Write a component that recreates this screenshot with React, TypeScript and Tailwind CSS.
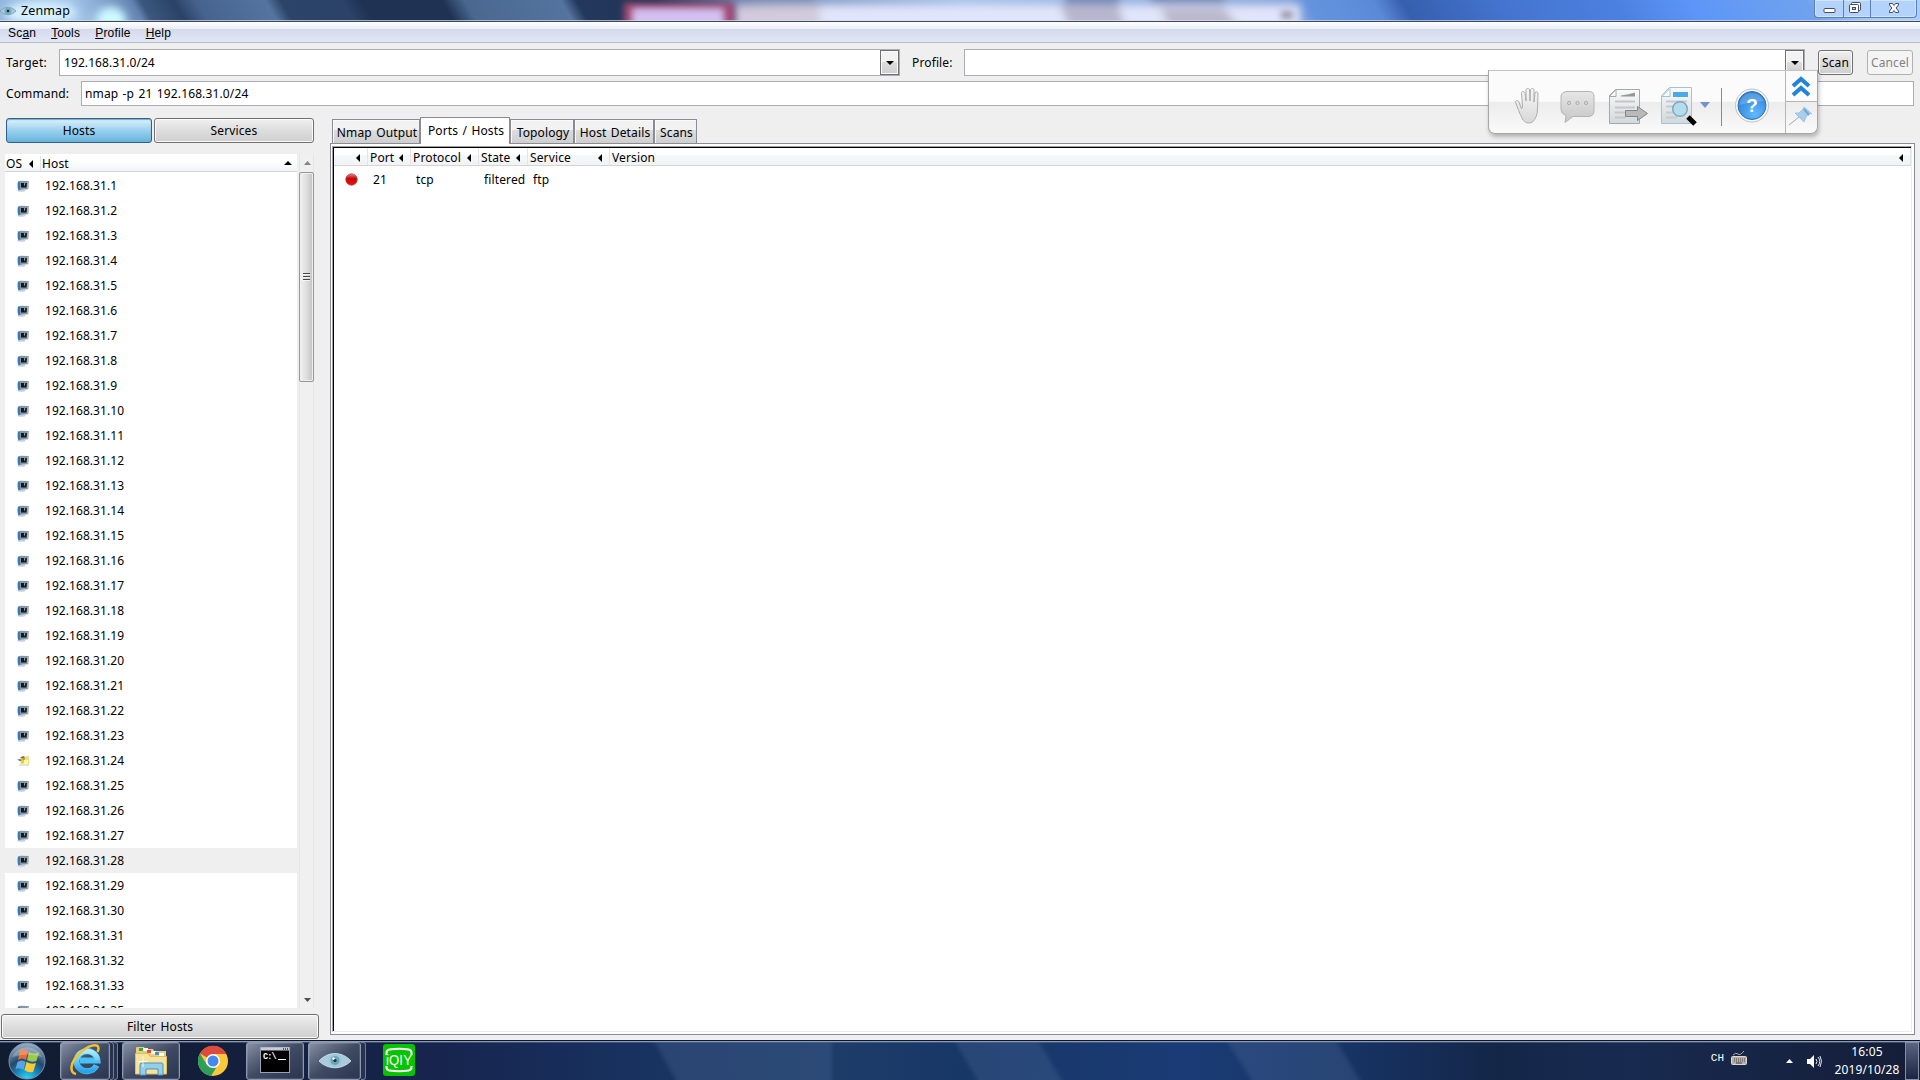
import type { ReactNode } from 'react'

const hosts = [...Array.from({ length: 33 }, (_, i) => i + 1), 35]

const columns = [
  { label: '', width: 'w-[34px]' },
  { label: 'Port', width: 'w-[43px]' },
  { label: 'Protocol', width: 'w-[68px]' },
  { label: 'State', width: 'w-[49px]' },
  { label: 'Service', width: 'w-[82px]' },
  { label: 'Version', width: 'flex-1' },
]

const tabs = [
  { label: 'Nmap Output', width: 'w-[88px]' },
  { label: 'Ports / Hosts', width: 'w-[90px]', active: true },
  { label: 'Topology', width: 'w-[64px]' },
  { label: 'Host Details', width: 'w-[80px]' },
  { label: 'Scans', width: 'w-[43px]' },
]

const LeftArrow = () => (
  <svg width="4" height="8" className="shrink-0">
    <path d="M4 0v8L0 4z" fill="#000" />
  </svg>
)

const HostIcon = () => (
  <svg width="12" height="12" className="shrink-0">
    <ellipse cx="4.5" cy="10.6" rx="4" ry="1.2" fill="#c3cde8" />
    <path d="M1 1.5 4 1v8.5L1.5 10.500C.3 8 .3 4 1 1.5z" fill="#3f79b5" />
    <path d="M3 .8 12 1l-.8 8.3L3 9.8z" fill="#8397a5" />
    <path d="M4 3h6L9.500 7.500H4z" fill="#15191d" />
    <path d="M7 3.200h1.500L7 6.500z" fill="#aebac1" />
    <path d="M10.500 1.500H12l-.8 7h-1z" fill="#b9c2c8" />
  </svg>
)

const ServerIcon = () => (
  <svg width="12" height="12" className="shrink-0">
    <path d="M5 2 12 1v9.500H3z" fill="#f3dd83" />
    <path d="M7 5h4v4.500H6z" fill="#fbf3c2" />
    <path d="M3 3 6 1l2 1-3 2z" fill="#e3392b" />
    <path d="M1 5.500 5 3h2v5H5L4 6.500z" fill="#f5cc00" />
    <path d="M0 4.500 3.500 4l1 2H3z" fill="#3a8fcf" />
    <path d="M5 3.500 8 3v1.500L6 5z" fill="#4fc23c" />
    <path d="M2 9.500h10v1.500H2z" fill="#e5e2d8" />
  </svg>
)

const DropButton = () => (
  <div className="flex w-[19px] items-center justify-center border border-[#707070] bg-linear-to-b from-[#f2f2f2] from-50% via-[#dddddd] via-50% to-[#cfcfcf] shadow-[inset_0_0_0_1px_#fafafa]">
    <svg width="8" height="4"><path d="M0 0h8L4 4z" fill="#000" /></svg>
  </div>
)

const Button = ({ className, children }: { className: string; children: ReactNode }) => (
  <div className={`flex h-[25px] items-center justify-center rounded-[3px] border ${className}`}>{children}</div>
)

const plain =
  'border-[#707070] bg-linear-to-b from-[#f0f0f0] from-0% via-[#dddddd] via-50% to-[#cfcfcf] shadow-[inset_0_0_0_1px_#fafafa]'

const TitleBar = () => (
  <div className="relative h-[22px] overflow-hidden">
    <svg width="1920" height="22" className="absolute inset-0">
      <defs>
        <linearGradient id="glass" gradientUnits="userSpaceOnUse" x1="0" x2="1920" y1="0" y2="0" gradientTransform="skewX(30)">
          <stop offset="0" stopColor="#94b6de" />
          <stop offset=".035" stopColor="#a5c8ea" />
          <stop offset=".05" stopColor="#8babd4" />
          <stop offset=".068" stopColor="#6384b2" />
          <stop offset=".073" stopColor="#3c577f" />
          <stop offset=".09" stopColor="#2b4266" />
          <stop offset=".102" stopColor="#46638f" />
          <stop offset=".138" stopColor="#55749f" />
          <stop offset=".146" stopColor="#2b4468" />
          <stop offset=".178" stopColor="#2c4268" />
          <stop offset=".188" stopColor="#1f3254" />
          <stop offset=".23" stopColor="#1f3254" />
          <stop offset=".242" stopColor="#4a688f" />
          <stop offset=".292" stopColor="#54739f" />
          <stop offset=".3" stopColor="#22385c" />
          <stop offset=".34" stopColor="#213458" />
          <stop offset=".4" stopColor="#7b93bd" />
          <stop offset=".5" stopColor="#a9c3ea" />
          <stop offset=".67" stopColor="#8aa6dc" />
          <stop offset=".68" stopColor="#6594de" />
          <stop offset=".715" stopColor="#5a89d8" />
          <stop offset=".73" stopColor="#365fae" />
          <stop offset=".78" stopColor="#4474cf" />
          <stop offset=".84" stopColor="#4c80e0" />
          <stop offset=".88" stopColor="#5d96f8" />
          <stop offset=".94" stopColor="#6fa2ee" />
          <stop offset=".97" stopColor="#a5cbf8" />
          <stop offset="1" stopColor="#a9d0fb" />
        </linearGradient>
        <filter id="soft" filterUnits="userSpaceOnUse" x="-20" y="-20" width="1960" height="70"><feGaussianBlur stdDeviation="4" /></filter>
        <filter id="softer" filterUnits="userSpaceOnUse" x="600" y="-20" width="720" height="70"><feGaussianBlur stdDeviation="3" /></filter>
      </defs>
      <rect width="1920" height="22" fill="url(#glass)" />
      <g filter="url(#soft)">
        <ellipse cx="40" cy="13" rx="36" ry="12" fill="#d6f1ff" />
        <ellipse cx="111" cy="21" rx="15" ry="14" fill="#ccfbff" />
        <path d="M735 5h565v24H735z" fill="#e1e5fa" />
        <path d="M735 5h85v24h-85z" fill="#d3cbdc" />
        <path d="M1060 5h58l8 24h-56z" fill="#b9b6ce" />
        <path d="M1160 8h64l16 20h-70z" fill="#bcb8cb" />
        <path d="M1065-8h55v12h-55zM1150-8h75v12h-75zM735-8h80v10h-80z" fill="#6f86b4" />
      </g>
      <g filter="url(#softer)">
        <path d="M624 3h110v26H624z" fill="#a54a72" />
        <path d="M633 9h90v20h-90z" fill="#d3c0f2" />
        <path d="M1281 11h12v8h-12z" fill="#9896a9" />
      </g>
      <path d="M0 20.5h1920" stroke="#d5e0ef" strokeOpacity=".7" />
      <path d="M0 21.5h1920" stroke="#3c4760" />
    </svg>
    <div className="relative flex h-[21px] items-center">
      <svg width="16" height="10" viewBox="0 0 16 10" className="mt-[1px]">
        <path d="M0 5C5 0 11 0 16 5 11 10 5 10 0 5z" fill="#a9cbd8" stroke="#6d97ab" strokeWidth=".7" />
        <circle cx="8" cy="5" r="3.500" fill="#78abc0" />
        <circle cx="8" cy="5" r="1.3" fill="#12303e" />
      </svg>
      <span className="ml-[5px] mt-[2px] text-[12.5px] leading-none tracking-[0.1px]">Zenmap</span>
      <div className="-mt-[4px] ml-auto mr-[3px] flex h-[18px] w-[103px] rounded-b-[4px] border border-t-0 border-[#5b7fb5] bg-[#b3d3fa] shadow-[inset_0_0_0_1px_#d0e4fb]">
        <svg width="101" height="17">
          <path d="M28.5 0v17M55.5 0v17" stroke="#5b7fb5" />
          <rect x="9" y="8.5" width="11" height="4" rx="1" fill="#fff" stroke="#444b5c" />
          <rect x="36.5" y="2.5" width="9" height="8" rx="1" fill="#fff" stroke="#444b5c" />
          <rect x="34.5" y="4.5" width="9" height="8" rx="1" fill="#fff" stroke="#444b5c" />
          <rect x="37.5" y="7.5" width="3" height="2" fill="#b3d3fa" stroke="#444b5c" />
          <path d="M74.5 3.5h3l1.5 2 1.5-2h3v1.5l-2.5 3 2.5 3v1.5h-3l-1.5-2-1.5 2h-3V11l2.5-3-2.5-3z" fill="#fff" stroke="#444b5c" />
        </svg>
      </div>
    </div>
  </div>
)

const MenuBar = () => (
  <div className="flex h-[21px] items-center border-b border-[#b6bccc] bg-linear-to-b from-white from-0% via-[#e9edf5] via-35% to-[#e0e5f5] font-['Liberation_Sans',sans-serif] text-[12px] tracking-[0.2px]">
    <div className="flex h-full w-full items-center gap-[15px] bg-linear-to-b from-transparent from-35% via-[#d4daec] via-35% to-[#e2e7f6] pl-2 pt-[2px]">
      <span>Sc<u>a</u>n</span>
      <span><u>T</u>ools</span>
      <span><u>P</u>rofile</span>
      <span><u>H</u>elp</span>
    </div>
  </div>
)

const HostPanel = () => (
  <div className="flex w-[330px] flex-col">
    <div className="mt-[12px] flex gap-[2px] pl-[6px]">
      <Button className="w-[146px] border-[#2c628b] bg-linear-to-b from-[#e0f1fa] from-0% via-[#98d1ef] via-50% to-[#68b3db] shadow-[inset_0_1px_1px_#7fa9c4]">Hosts</Button>
      <Button className={`w-[160px] ${plain}`}>Services</Button>
    </div>
    <div className="mt-[11px] flex h-[854px] pl-[5px]">
      <div className="w-[292px] overflow-hidden bg-white">
        <div className="flex h-[18px] items-center border-b border-[#d5d5d5] bg-linear-to-b from-white from-45% to-[#f1f3f5] pt-[2px]">
          <div className="flex h-full w-[36px] items-center justify-between border-r border-[#e2e4e6] pl-[1px] pr-[7px]">OS <LeftArrow /></div>
          <span className="pl-[1px]">Host</span>
          <svg width="8" height="4" className="-mt-[2px] ml-auto mr-[5px]"><path d="M0 4h8L4 0z" /></svg>
        </div>
        <div className="pt-px">
          {hosts.map((n) => (
            <div key={n} className={`flex h-[25px] items-center gap-[16px] pl-[12px] ${n === 28 ? 'bg-[#efefef]' : ''}`}>
              {n === 24 ? <ServerIcon /> : <HostIcon />}
              <span className="tracking-[0.06px]">192.168.31.{n}</span>
            </div>
          ))}
        </div>
      </div>
      <div className="ml-[2px] flex w-[15px] flex-col items-center border-x border-[#e6e6e6] bg-[#f0f0f0]">
        <div className="flex h-[18px] items-center pl-px"><svg width="7" height="4"><path d="M0 4h7L3.5 0z" fill="#858585" /></svg></div>
        <div className="flex h-[210px] w-[15px] shrink-0 items-center justify-center rounded-[2px] border border-[#979797] bg-linear-to-r from-[#f3f3f3] from-0% via-[#dedede] via-50% to-[#c2c2c6] shadow-[inset_0_0_0_1px_#eeeeee]">
          <svg width="7" height="9"><path d="M0 .5h7M0 3.500h7M0 6.500h7" stroke="#444" /><path d="M0 1.500h7M0 4.500h7M0 7.500h7" stroke="#fff" strokeOpacity=".7" /></svg>
        </div>
        <svg width="7" height="4" className="mb-[6px] ml-px mt-auto"><path d="M0 0h7L3.5 4z" fill="#505050" /></svg>
      </div>
    </div>
    <Button className={`ml-[1px] mt-[6px] w-[318px] ${plain}`}>Filter Hosts</Button>
  </div>
)

const Notebook = () => (
  <div className="flex flex-1 flex-col pr-[5px]">
    <div className="mt-[11px] flex h-[26px] items-end pl-[2px]">
      {tabs.map((tab) => (
        <div
          key={tab.label}
          className={`flex items-center justify-center whitespace-nowrap border border-b-0 border-[#898c95] pl-[2px] ${tab.width} ${
            tab.active ? 'relative z-10 -mb-px h-[27px] bg-white' : 'h-[24px] bg-linear-to-b from-[#f2f2f2] from-45% via-[#dddddd] via-45% to-[#cfcfcf] pt-[2px] shadow-[inset_1px_1px_0_#fafafa]'
          }`}
        >
          {tab.label}
        </div>
      ))}
    </div>
    <div className="h-[892px] border border-[#898c95] bg-white p-[2px] pl-px">
      <div className="h-full border border-[#ededed] border-t-[#a0a0a0] border-l-[#a0a0a0]">
        <div className="h-full border-l border-t border-black">
          <div className="flex h-[18px] border-b border-[#d5d5d5] bg-linear-to-b from-white from-40% via-[#f5f7f8] via-40% to-[#f0f2f4]">
            {columns.map((col) => (
              <div key={col.label} className={`flex items-center justify-between border-r border-[#e2e4e6] pl-[2px] pr-[7px] pt-[2px] ${col.width}`}>
                <span>{col.label}</span>
                <LeftArrow />
              </div>
            ))}
          </div>
          <div className="flex h-[27px] items-center pl-[11px]">
            <svg width="13" height="13">
              <defs><linearGradient id="dot" x1="0" x2="0" y1="0" y2="1"><stop offset="0" stopColor="#e98b8b" /><stop offset=".4" stopColor="#c40808" /><stop offset="1" stopColor="#f01010" /></linearGradient></defs>
              <circle cx="6.5" cy="6.5" r="5.7" fill="url(#dot)" stroke="#b03a3a" strokeWidth=".8" />
            </svg>
            <span className="ml-[15px] w-[43px]">21</span>
            <span className="w-[68px]">tcp</span>
            <span className="w-[49px]">filtered</span>
            <span>ftp</span>
          </div>
        </div>
      </div>
    </div>
  </div>
)

// Docked capture toolbar that floats over the window
const FloatingToolbar = () => (
  <div className="absolute left-[1488px] top-[70px] flex h-[64px] w-[330px] overflow-visible rounded-b-[7px] border border-[#a6a6a6] border-t-[#c4c4c4] bg-linear-to-b from-[#fbfbfb] from-49% via-[#ececec] via-50% to-[#fafafa] shadow-[1px_3px_4px_rgba(0,0,0,0.25)]">
    <svg width="296" height="62" className="shrink-0">
      <defs>
        <linearGradient id="grey" x1="0" x2="0" y1="0" y2="1"><stop offset="0" stopColor="#e6e6e6" /><stop offset="1" stopColor="#c6c6c6" /></linearGradient>
        <linearGradient id="page" x1="0" x2="0" y1="0" y2="1"><stop offset="0" stopColor="#fafafa" /><stop offset="1" stopColor="#d2d8dc" /></linearGradient>
        <linearGradient id="palm" x1="0" x2="0" y1="0" y2="1"><stop offset="0" stopColor="#f6f6f6" /><stop offset="1" stopColor="#d8d8d8" /></linearGradient>
        <radialGradient id="help" cx=".6" cy=".8" r=".8"><stop offset="0" stopColor="#62b8ff" /><stop offset="1" stopColor="#2a7fd4" /></radialGradient>
      </defs>
      {/* hand */}
      <path d="M26.500 31c0-2 3-2 3.500 0l2.500 7 1-2-1-14c0-2 3-2 3.500 0l1 8V19c0-2 3.500-2 3.500 0l.5 11 .5-11c0-2 3.500-2 3.500 0v12l1-9c.5-2 3-1.500 3 1l-.500 15c0 6-2 10-5 13-4 2-8 1-10-3-3-6-5-11-7-17z" fill="url(#palm)" stroke="#adadad" />
      {/* speech bubble */}
      <path d="M79 20.500h21q5 0 5 5v14q0 6-6 6H84l-8 6 1-7q-5-2-5-6V26q0-5.500 7-5.500z" fill="url(#grey)" stroke="#b4b4b4" />
      <g fill="#d9d9d9" stroke="#999" strokeWidth=".7"><circle cx="80" cy="32" r="1.600" /><circle cx="88.500" cy="32" r="1.600" /><circle cx="97" cy="32" r="1.600" /></g>
      {/* export page */}
      <path d="M126.500 18.500h24v34h-30v-28z" fill="url(#page)" stroke="#a8a8a8" strokeLinejoin="round" />
      <path d="M120.500 25.500h6.500v-7z" fill="#fff" stroke="#a8a8a8" />
      <path d="M132 24.500q8-1 14-3v4h-14z" fill="#989898" />
      <path d="M126 30.500h20M126 36.500h20M126 41.500h11M126 46.500h11" stroke="#c6c6c6" strokeWidth="2" />
      <path d="M136.500 39.500h12v-4l10 7-10 7v-4h-12z" fill="#b9b9b9" stroke="#858585" />
      {/* search page */}
      <path d="M180.500 16.500h22v36h-30v-28z" fill="url(#page)" stroke="#a3c3d6" strokeLinejoin="round" />
      <path d="M173 25.500h8v-8z" fill="#fff" stroke="#a3c3d6" />
      <path d="M184 21h15v5h-15z" fill="#49aaea" />
      <path d="M177 30.500h21M177 35.500h11M177 41.500h9M177 46.500h11" stroke="#c3ccd2" strokeWidth="2" />
      <circle cx="191" cy="38" r="7.300" fill="#b5dceb" stroke="#7ba9c3" strokeWidth="1.500" />
      <path d="m199 46 7 7" stroke="#000" strokeWidth="5" />
      <path d="M211 31h10l-5 6z" fill="#7690cf" />
      <path d="M232.500 17v38" stroke="#8b8b8b" />
      {/* help */}
      <circle cx="263" cy="34.500" r="16.500" fill="#f6f6f6" stroke="#c2c2c2" />
      <circle cx="263" cy="34.500" r="14" fill="url(#help)" stroke="#2872ba" />
      <path d="M250 34a13 13 0 0 1 25-4q-13 1-25 4z" fill="#fff" fillOpacity=".18" />
      <text x="263" y="41" textAnchor="middle" fill="#fff" className="font-['Liberation_Sans'] text-[19px] font-bold">?</text>
    </svg>
    <svg width="32" height="62" className="shrink-0">
      <path d="M.5 0v62M0 30.500h32" stroke="#b5b5b5" />
      <path d="m8 15 8-7 8 7M8 24l8-7 8 7" fill="none" stroke="#2084d8" strokeWidth="4" />
      <path d="m4 54 10-8" stroke="#9fa9b2" />
      <path d="m10 42 9 9 2-5 4-4 2 1-8-7-1 2-4 4z" fill="#a6cdea" stroke="#9cc6e6" />
      <path d="m19 38 5 6" stroke="#6aa9da" strokeWidth="2" />
    </svg>
  </div>
)

const taskButton = 'flex h-[38px] shrink-0 items-center justify-center rounded-[3px] border border-[#8d98ae] bg-linear-to-br from-[#8791a6] via-[#3f4a63] to-[#2a3550] shadow-[inset_0_0_0_1px_rgba(255,255,255,0.12)]'
const taskStack = 'h-[38px] shrink-0 rounded-r-[3px] border border-l-0 border-[#707c94] bg-[#26324e]'

const EyeIcon = () => (
  <svg width="32" height="18" viewBox="0 0 32 18">
    <path d="M0 9C9-1 23-1 32 9c-9 9-23 9-32 0z" fill="#a9cbdc" stroke="#d5e8f0" strokeWidth=".8" />
    <circle cx="16" cy="8.500" r="6.500" fill="#9cc8d8" />
    <circle cx="16" cy="8.500" r="4.500" fill="#6ba2b9" />
    <circle cx="16" cy="8.500" r="1.600" fill="#12313f" />
    <circle cx="14.500" cy="6.500" r="1.200" fill="#fff" />
  </svg>
)

const Taskbar = () => (
  <div className="relative h-[40px] overflow-hidden border-t border-[#0d1524] bg-[#14264c] text-white">
    <svg width="1920" height="39" className="absolute inset-0">
      <defs>
        <linearGradient id="bar" x1="0" x2="1" y1="0" y2="0">
          <stop offset="0" stopColor="#111c31" />
          <stop offset=".12" stopColor="#131f3b" />
          <stop offset=".24" stopColor="#172650" />
          <stop offset=".33" stopColor="#18325f" />
          <stop offset=".44" stopColor="#1d3c68" />
          <stop offset=".5" stopColor="#173767" />
          <stop offset=".62" stopColor="#1a3b75" />
          <stop offset=".7" stopColor="#173465" />
          <stop offset=".78" stopColor="#142648" />
          <stop offset=".85" stopColor="#182a50" />
          <stop offset="1" stopColor="#141d36" />
        </linearGradient>
        <filter id="edge"><feGaussianBlur stdDeviation="2" /></filter>
      </defs>
      <rect width="1920" height="39" fill="url(#bar)" />
      <g filter="url(#edge)" fill="#5d7ba6" fillOpacity=".24">
        <path d="M652-4h180v47H678zM952-4h84l28 47h-84zM1224-4h110l28 47h-108z" />
      </g>
      <path d="M0 .5h1920" stroke="#8a9cb9" />
      <path d="M0 1.500h1920" stroke="#5d739a" strokeOpacity=".5" />
    </svg>
    <div className="relative flex h-full items-center">
      <svg width="38" height="38" className="ml-2 shrink-0">
        <defs>
          <radialGradient id="orb" cx=".5" cy="1" r=".95"><stop offset="0" stopColor="#35d8f5" /><stop offset=".35" stopColor="#1684bd" /><stop offset=".6" stopColor="#24486c" /><stop offset="1" stopColor="#8fa9bf" /></radialGradient>
        </defs>
        <circle cx="19" cy="19" r="18" fill="url(#orb)" stroke="#7894ab" />
        <path d="M12 8q5-2 8 1l-2 9q-4-3-8 0z" fill="#ec6a31" />
        <path d="M21 10q5 3 10 0l-2.500 9q-5 2-9.500-1z" fill="#9cca4b" />
        <path d="M9.500 20q4-3 8 0l-2 8q-4-3-8-1z" fill="#58a5e2" />
        <path d="M18.500 20q5 3 9.500 1l-3 9q-5 1-8.500-2z" fill="#fbc934" />
        <path d="M4 15a16 15 0 0 1 30 0q-14-5-30 0z" fill="#fff" fillOpacity=".25" />
      </svg>
      <div className={`ml-[14px] w-[50px] ${taskButton}`}>
        <svg width="32" height="32" className="-mt-[2px]">
          <defs><linearGradient id="ie" x1="0" x2="0" y1="0" y2="1"><stop offset="0" stopColor="#a9ecff" /><stop offset="1" stopColor="#27a4ec" /></linearGradient></defs>
          <path d="M27.500 21.500a10.500 10 0 1 1 1-5H11" fill="none" stroke="#49c1f6" strokeWidth="6" />
          <path d="M27.500 21.500a10.500 10 0 1 1 1-5" fill="none" stroke="url(#ie)" strokeWidth="5" />
          <path d="M7 30c-7-1-6-12 4-21C19 1 29-1 29.500 4q0 2-1 4" fill="none" stroke="#f3c12c" strokeWidth="2.500" />
        </svg>
      </div>
      <div className={`w-[4px] ${taskStack}`} />
      <div className={`w-[4px] ${taskStack}`} />
      <div className={`ml-[4px] w-[58px] ${taskButton}`}>
        <svg width="34" height="32">
          <path d="M2 3q0-1 1-1h7l1 2h8l1 2h12v23H2z" fill="#e9cd79" />
          <path d="M5 3h4v3H5z" fill="#31a745" />
          <path d="M9 3h5v3H9zM17 6h5v3h-5zM25 8h5v3h-5z" fill="#fff" />
          <path d="M13 5h4v3h-4z" fill="#e44" />
          <path d="M21 7h4v3h-4z" fill="#3e8fd8" />
          <path d="M1.500 8.500H14l2 3h16.500V29h-31z" fill="#f5e29b" stroke="#dcbf69" />
          <path d="M8 18h20q1 0 1 2v10h-5v-6H12v6H6V20q0-2 2-2z" fill="#93cfe8" stroke="#4e91bd" />
          <path d="M9 11v11M4 16.500h10" stroke="#fff" strokeOpacity=".8" />
        </svg>
      </div>
      <svg width="32" height="32" viewBox="0 0 32 32" className="ml-[17px] shrink-0">
        <circle cx="16" cy="16" r="15" fill="#fbc73b" />
        <path d="M16 16 3 8.500A15 15 0 0 1 29.500 9H16z" fill="#dd4b3e" />
        <path d="M3 8.500 10 20l9 3-5 8A15 15 0 0 1 3 8.500z" fill="#2e9f5b" />
        <circle cx="16" cy="16" r="7" fill="#fff" />
        <circle cx="16" cy="16" r="5.500" fill="#4688f1" />
      </svg>
      <div className={`ml-[17px] w-[58px] ${taskButton}`}>
        <svg width="30" height="26" className="-mt-[2px]">
          <rect x=".5" y=".5" width="29" height="25" fill="#000" stroke="#9aa3b3" />
          <path d="M1 2h28" stroke="#c6ccd6" strokeWidth="3" />
          <path d="M23 2h1M25 2h1M27 2h1" stroke="#4c5670" strokeWidth="2" />
          <text x="3" y="12" fill="#fff" className="font-['Liberation_Mono'] text-[8.5px] font-bold tracking-[-0.8px]">C:\</text>
          <path d="M18 12.500h8" stroke="#fff" />
        </svg>
      </div>
      <div className={`ml-[4px] w-[53px] ${taskButton}`}><EyeIcon /></div>
      <div className={`w-[5px] ${taskStack}`} />
      <svg width="32" height="32" className="-mt-px ml-[17px] shrink-0">
        <rect width="32" height="32" rx="3" fill="#08c400" />
        <path d="M3.500 11V9q0-3 3-3.500 10-1.500 19 0 3 .5 3 3.500v2M3.500 22v1q0 3 3 3.500 10 1.500 19 0 3-.5 3-3.500v-1" fill="none" stroke="#fff" strokeWidth="2" />
        <text x="16" y="21" textAnchor="middle" textLength="26" lengthAdjust="spacingAndGlyphs" fill="#fff" className="font-['Liberation_Sans'] text-[14px]">iQIY</text>
      </svg>
      <span className="-mt-[4px] ml-auto mr-[7px] font-['Liberation_Mono',monospace] text-[11px] leading-none tracking-normal">CH</span>
      <svg width="17" height="15" className="-mt-[5px] mr-[38px]">
        <path d="M2 4q3-3 5-1t6-3" fill="none" stroke="#aaa" />
        <rect x=".5" y="5.500" width="15" height="8" rx="1" fill="#b5b0a9" stroke="#dad6d0" />
        <path d="M3 8h11M3 10h11" stroke="#444" strokeDasharray="1 1" /><path d="M5 12h6" stroke="#444" />
      </svg>
      <svg width="7" height="4" className="mr-[14px]"><path d="M0 4h7L3.500 0z" fill="#fff" /></svg>
      <svg width="15" height="15" className="mr-[11px] mt-px">
        <path d="M0 5h3l4-4v13l-4-4H0z" fill="#fff" />
        <path d="M9 5q2 2.500 0 5M11 3q3.500 4.500 0 9M13 2q3 5 0 11" fill="none" stroke="#e7eaf0" />
      </svg>
      <div className="flex w-[68px] flex-col items-center pt-px text-[12px] leading-[18px]">
        <span>16:05</span>
        <span>2019/10/28</span>
      </div>
      <div className="ml-[4px] mr-[1px] h-[38px] w-[14px] border border-[#8590a8] bg-linear-to-b from-[#5a6580] to-[#1b2544]" />
    </div>
  </div>
)

export default function App() {
  return (
    <div className="relative flex h-[1080px] w-[1920px] flex-col overflow-hidden bg-[#efefef] font-['Noto_Sans','Open_Sans',sans-serif] text-[12px] leading-[16px] tracking-[0.13px] text-black [word-spacing:1.1px]">
      <TitleBar />
      <MenuBar />

      <div className="mt-[6px] flex h-[27px] items-center">
        <span className="w-[59px] pl-[6px] tracking-[0.3px]">Target:</span>
        <div className="flex h-full w-[841px] border border-[#abadb3] bg-white">
          <span className="flex flex-1 items-center pl-[4px] tracking-[0.08px]">192.168.31.0/24</span>
          <DropButton />
        </div>
        <span className="w-[64px] pl-[12px]">Profile:</span>
        <div className="flex h-full w-[841px] justify-end border border-[#abadb3] bg-white"><DropButton /></div>
        <Button className={`ml-[13px] w-[35px] ${plain}`}>Scan</Button>
        <Button className="ml-[14px] w-[46px] border-[#adb2b5] bg-[#f4f4f4] text-[#838383]">Cancel</Button>
      </div>
      <div className="mt-[5px] flex h-[25px] items-center">
        <span className="w-[81px] pl-[6px]">Command:</span>
        <div className="flex h-full w-[1833px] items-center border border-[#abadb3] bg-white pl-[3px]">nmap -p 21 192.168.31.0/24</div>
      </div>

      <div className="flex h-[934px]">
        <HostPanel />
        <Notebook />
      </div>
      <Taskbar />
      <FloatingToolbar />
    </div>
  )
}
